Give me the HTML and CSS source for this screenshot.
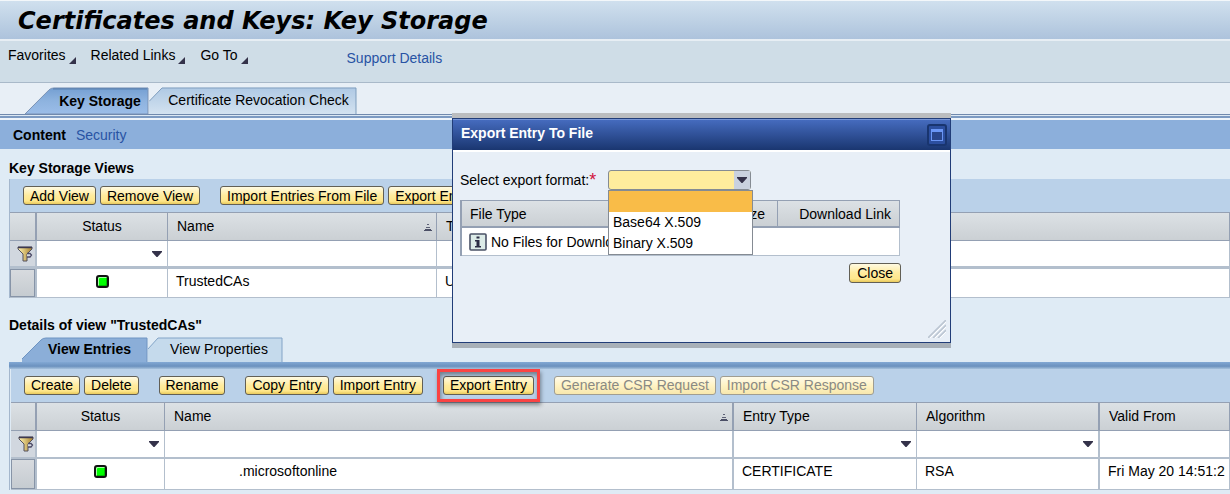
FILE: index.html
```html
<!DOCTYPE html>
<html lang="en">
<head>
<meta charset="utf-8">
<title>Certificates and Keys: Key Storage</title>
<link rel="stylesheet" href="styles.css">
</head>
<body>
<svg width="0" height="0" class="defs" aria-hidden="true">
  <defs>
    <linearGradient id="gold" x1="0" x2="1"><stop offset="0" stop-color="#fff3b0"/><stop offset="1" stop-color="#a9822f"/></linearGradient>
    <symbol id="funnel" viewBox="0 0 16 16">
      <path d="M1 1H15V3L10 8V15H6V8L1 3Z" fill="url(#gold)" stroke="#55515c"/>
      <path d="M1 1.5H15" stroke="#3d3950" stroke-width="1.5"/>
      <path d="M10 7.500H13L14.500 9L13 11H10" fill="#d5dae0" stroke="#4c4a66" stroke-width="1.3"/>
    </symbol>
    <symbol id="sort" viewBox="0 0 8 8">
      <path d="M3 0H5V1H3Z" fill="#5d6176"/><path d="M2 3.500H6" stroke="#5d6176" stroke-width="1"/><path d="M1 5H7V6H8V7H0V6H1Z" fill="#4b4f66"/>
    </symbol>
    <symbol id="corner" viewBox="0 0 7 7"><path d="M7 0V7H0Z" fill="#34324a"/></symbol>
    <symbol id="down" viewBox="0 0 10 6"><path d="M0 0H10V1L5.500 6H4.500L0 1Z" fill="#34324a"/></symbol>
  </defs>
</svg>

<header class="title-bar"><h1>Certificates and Keys: Key Storage</h1></header>

<nav class="menu-bar">
  <button class="menu">Favorites<svg class="corner"><use href="#corner"/></svg></button>
  <button class="menu">Related Links<svg class="corner"><use href="#corner"/></svg></button>
  <button class="menu">Go To<svg class="corner"><use href="#corner"/></svg></button>
  <a class="support" href="#support">Support Details</a>
</nav>

<nav class="tabs main-tabs">
  <button class="tab active"><svg class="tab-shape" viewBox="0 0 124 28" preserveAspectRatio="none"><defs><linearGradient id="on" x2="0" y2="1"><stop offset="0" stop-color="#749fd2"/><stop offset=".5" stop-color="#8eb3df"/><stop offset="1" stop-color="#9bbde8"/></linearGradient></defs><path d="M0 28L24 3Q26 1 29 1H123V28Z" fill="url(#on)" stroke="#7891b4"/><path d="M28 2H122" stroke="#567aa9"/></svg><span>Key Storage</span></button>
  <button class="tab"><svg class="tab-shape" viewBox="0 0 208 28" preserveAspectRatio="none"><defs><linearGradient id="off" x2="0" y2="1"><stop offset="0" stop-color="#afc9e4"/><stop offset="1" stop-color="#d3e2f0"/></linearGradient></defs><path d="M0 28V15L13 1H207V28Z" fill="url(#off)"/><path d="M0 15L13 1H207V28" fill="none" stroke="#7d9cbd"/></svg><span>Certificate Revocation Check</span></button>
</nav>
<div class="tab-rule"></div>
<nav class="sub-nav"><a class="current" href="#content">Content</a><a href="#security">Security</a></nav>

<main>
  <section class="views">
    <h2>Key Storage Views</h2>
    <div class="grid-box">
      <div class="toolbar">
        <button class="btn">Add View</button><button class="btn">Remove View</button>
        <button class="btn group">Import Entries From File</button><button class="btn">Export Entries To File</button>
      </div>
      <table class="grid">
        <colgroup><col class="c-pick"><col class="c-state"><col class="c-view"><col></colgroup>
        <thead><tr><th class="thick"></th><th class="center">Status</th><th><div class="head">Name<svg class="sort"><use href="#sort"/></svg></div></th><th>Type</th></tr></thead>
        <tbody>
          <tr class="filter"><td class="pick thick"><svg class="funnel"><use href="#funnel"/></svg></td><td><button class="drop" aria-label="Filter status"><svg class="down"><use href="#down"/></svg></button></td><td></td><td></td></tr>
          <tr><td class="pick thick raised"></td><td class="center"><i class="led"></i></td><td>TrustedCAs</td><td>USER</td></tr>
        </tbody>
      </table>
    </div>
  </section>

  <section class="details">
    <h2>Details of view "TrustedCAs"</h2>
    <nav class="tabs small-tabs">
      <button class="tab active"><svg class="tab-shape" viewBox="0 0 126 25" preserveAspectRatio="none"><path d="M0 25V22L19 3Q21 1 24 1H125V25Z" fill="#8baed8"/><path d="M0 22L19 3Q21 1 24 1H125V25" fill="none" stroke="#6e94c2"/></svg><span>View Entries</span></button>
      <button class="tab"><svg class="tab-shape" viewBox="0 0 135 25" preserveAspectRatio="none"><path d="M0 25V12L10 1H134V25Z" fill="#c5daec"/><path d="M0 12L10 1H134V25" fill="none" stroke="#83a4c7"/></svg><span>View Properties</span></button>
    </nav>
    <div class="blue-rule"></div>
    <div class="grid-box inset">
      <div class="toolbar">
        <button class="btn">Create</button><button class="btn">Delete</button>
        <button class="btn group">Rename</button>
        <button class="btn group">Copy Entry</button><button class="btn">Import Entry</button>
        <span class="marked group"><button class="btn">Export Entry</button></span>
        <button class="btn group" disabled>Generate CSR Request</button><button class="btn" disabled>Import CSR Response</button>
      </div>
      <table class="grid entries">
        <colgroup><col class="c-pick"><col class="c-flag"><col class="c-name"><col class="c-type"><col class="c-type"><col></colgroup>
        <thead><tr><th class="thick"></th><th class="center">Status</th><th class="thick"><div class="head">Name<svg class="sort"><use href="#sort"/></svg></div></th><th>Entry Type</th><th class="thick">Algorithm</th><th>Valid From</th></tr></thead>
        <tbody>
          <tr class="filter"><td class="pick thick"><svg class="funnel"><use href="#funnel"/></svg></td><td><button class="drop" aria-label="Filter status"><svg class="down"><use href="#down"/></svg></button></td><td class="thick"></td><td><button class="drop" aria-label="Filter entry type"><svg class="down"><use href="#down"/></svg></button></td><td class="thick"><button class="drop" aria-label="Filter algorithm"><svg class="down"><use href="#down"/></svg></button></td><td></td></tr>
          <tr><td class="pick thick raised"></td><td class="center"><i class="led"></i></td><td class="thick host">.microsoftonline</td><td>CERTIFICATE</td><td class="thick">RSA</td><td class="date"><div>Fri May 20 14:51:28</div></td></tr>
        </tbody>
      </table>
    </div>
  </section>
</main>

<div class="dialog" role="dialog" aria-labelledby="dialog-title">
  <div class="dialog-head"><h2 id="dialog-title">Export Entry To File</h2>
    <button class="maximize" aria-label="Maximize"><svg width="20" height="22" viewBox="0 0 20 22"><rect x="1" y="1" width="18" height="20" rx="2" fill="#2c4f9f" stroke="#19356f" stroke-width="2"/><rect x="4.500" y="5.500" width="11" height="11" fill="#29458a" stroke="#6a96f5"/><path d="M4 6.500H16" stroke="#6a96f5" stroke-width="3"/></svg></button>
  </div>
  <div class="dialog-body">
    <div class="field">
      <label for="format">Select export format:<b class="star">*</b></label>
      <div class="combo">
        <select id="format"><option></option><option>Base64 X.509</option><option>Binary X.509</option></select>
        <span class="combo-arrow"><svg class="down"><use href="#down"/></svg></span>
        <ul class="options" role="listbox"><li class="hot" role="option"></li><li role="option">Base64 X.509</li><li role="option">Binary X.509</li></ul>
      </div>
    </div>
    <table class="files">
      <colgroup><col><col class="c-size"><col class="c-link"></colgroup>
      <thead><tr><th>File Type</th><th class="right">File Size</th><th class="right">Download Link</th></tr></thead>
      <tbody><tr><td colspan="3"><div class="note"><svg width="18" height="18" viewBox="0 0 18 18"><rect x="1" y="1" width="16" height="16" rx="1" fill="#dcebe7" stroke="#4a5266" stroke-width="1.6"/><path d="M7.500 3.500H10.500V5.500H7.500ZM6 7H10.500V13H12V14.500H6V13H7.500V8.500H6Z" fill="#2b2c44"/></svg>No Files for Download</div></td></tr></tbody>
    </table>
    <div class="actions"><button class="btn">Close</button></div>
  </div>
  <svg class="grip" width="18" height="18" viewBox="0 0 18 18"><path d="M0 18L18 0M5 18L18 5M10 18L18 10" stroke="#bcc6d2" stroke-width="1.6"/><path d="M2 18L18 2M7 18L18 7M12 18L18 12" stroke="#fff"/></svg>
</div>
</body>
</html>
```

FILE: styles.css
```css
* { box-sizing: border-box; }
body { margin: 0; position: relative; overflow: hidden; min-height: 100vh; background: #dfebf5; color: #000; font: 14px/16px "Liberation Sans", Arial, sans-serif; }
button, select { font: inherit; color: inherit; }
h1, h2 { margin: 0; font-size: 14px; line-height: 16px; font-weight: bold; }
a { color: #2853a4; text-decoration: none; }
.defs { position: absolute; }

.title-bar { height: 41px; padding: 4px 18px; border-top: 1px solid #f3f7fa; border-bottom: 2px solid #e7eef4; background: linear-gradient(#d0e0ee, #adc3dc); }
.title-bar h1 { font: italic bold 24px/32px Verdana, "DejaVu Sans", sans-serif; white-space: nowrap; }

.menu-bar { display: flex; align-items: center; height: 42px; padding: 0 8px 14px; background: #cfdde7; border-bottom: 1px solid #a9b9c9; }
.menu { display: flex; align-items: flex-end; gap: 3px; margin-right: 15px; padding: 0; border: 0; background: none; }
.corner { width: 7px; height: 7px; margin-bottom: -1px; }
.support { margin: 6px 0 0 84px; }

.tabs { display: flex; }
.tab { position: relative; padding: 0; border: 0; background: none; text-align: center; }
.tab span { position: relative; }
.tab-shape { position: absolute; inset: 0; width: 100%; height: 100%; }
.tab.active { font-weight: bold; }
.main-tabs { height: 31px; padding: 4px 0 0 25px; background: #e8eff6; }
.main-tabs .tab { width: 208px; height: 27px; padding: 0 0 2px 11px; }
.main-tabs .active { width: 124px; padding: 0 0 0 26px; }
.tab-rule { height: 6px; border-bottom: 2px solid #eef4fa; background: linear-gradient(#7089ad 1px, #dce8f3 1px 2px, #7c9ac2 2px); }
.sub-nav { display: flex; gap: 10px; align-items: center; height: 29px; padding: 0 13px 0; background: #8cafdb; }
.current { color: #000; font-weight: bold; }

main { padding-left: 9px; }
.views { padding-top: 11px; }
.views h2 { margin-bottom: 3px; }
.grid-box { border-left: 1px solid #a4b7cd; }
.toolbar { display: flex; align-items: center; gap: 4px; height: 33px; padding: 0 13px; background: #bad1e9; }
.btn { flex: none; height: 19px; padding: 0 6px; border: 1px solid #625f55; border-radius: 3px; background: linear-gradient(#fffae2, #ffeb9d 50%, #ffe78c 82%, #e8c95c); line-height: 16px; white-space: nowrap; }
.group { margin-left: 16px; }
.btn:disabled { color: #8a8a84; border-color: #a09d91; background: linear-gradient(#fffbea, #fff3c4 50%, #f7e7ad); }

.grid { width: 100%; table-layout: fixed; border-collapse: separate; border-spacing: 0; }
.grid th { height: 29px; padding: 0 9px 2px; border: solid #94a0b3; border-width: 1px 1px 1px 0; background: linear-gradient(#dce1e5, #cbd0d4); font-weight: normal; text-align: left; }
.grid td { height: 29px; padding: 0 8px 4px; border-right: 1px solid #b3bfcd; border-bottom: 1px solid #b3bfcd; background: #fff; white-space: nowrap; }
.grid .filter td { height: 28px; padding: 0 7px; border-bottom: 3px solid #b3bfcd; }
.grid .thick { border-right-width: 2px; }
.grid .center { text-align: center; }
.grid .pick { padding: 0; background: #d1d7df; text-align: center; }
.grid .raised { background: linear-gradient(#d8dbdf, #c5cbd0); box-shadow: inset 0 0 0 1px #8794a7; }
.c-pick { width: 27px; } .c-state { width: 131px; } .c-view { width: 269px; }
.entries .c-pick { width: 26px; } .c-flag { width: 128px; } .c-name { width: 569px; } .c-type { width: 183px; }
.head { display: flex; justify-content: space-between; align-items: center; }
.sort { width: 8px; height: 8px; margin: 4px -5px 0 0; }
.funnel { display: block; width: 16px; height: 16px; margin: 0 auto; }
.drop { display: block; margin: 0 -2px 0 auto; padding: 0; border: 0; background: none; line-height: 0; }
.down { width: 10px; height: 6px; }
.led { display: block; width: 13px; height: 13px; margin: 0 auto; border: 2px solid #111; border-radius: 3px; background: #0f0; box-shadow: inset 1px 1px #a5ffa5, inset -1px -1px #00bd00; }

.details { padding-top: 19px; }
.small-tabs { height: 29px; padding: 4px 0 0 13px; }
.small-tabs .tab { width: 135px; height: 25px; padding: 0 0 2px 7px; }
.small-tabs .active { width: 126px; padding: 0 0 2px 9px; }
.blue-rule { height: 7px; background: linear-gradient(#82a8d4, #6b91be 60%, #a7c2dd); }
.inset { padding-left: 1px; }
.inset .toolbar { padding-bottom: 1px; }
.entries .filter td { height: 28px; border-bottom-width: 2px; }
.entries td { height: 31px; padding-bottom: 6px; }
.entries .host { padding-left: 74px; }
.grid .date { padding-right: 4px; }
.date div { overflow: hidden; }
.marked { position: relative; display: flex; }
.marked::after { content: ""; position: absolute; inset: -7px -6px; border: 3px solid #fa4343; box-shadow: 1px 3px 4px #0006, inset 1px 3px 4px #0006; pointer-events: none; }

.dialog { position: absolute; left: 452px; top: 118px; width: 499px; height: 225px; border: 1px solid #213d78; background: #e8eff7; box-shadow: 0 -5px #bbbdbf, 0 5px #a8b0b8; }
.dialog-head { display: flex; align-items: center; justify-content: space-between; height: 31px; padding: 0 3px 0 8px; border-top: 1px solid #7795d5; background: linear-gradient(#456bbe, #1a3670); box-shadow: 0 2px #fff; color: #fff; }
.dialog-head h2 { padding-bottom: 4px; }
.maximize { padding: 0; border: 0; background: none; line-height: 0; }
.dialog-body { padding: 20px 50px 0 7px; }
.field { display: flex; align-items: center; height: 20px; }
.field label { width: 148px; white-space: nowrap; }
.star { color: #d2133c; font-weight: normal; font-size: 18px; line-height: 16px; vertical-align: bottom; }
.combo { position: relative; width: 143px; height: 20px; }
.combo select { appearance: none; display: block; width: 100%; height: 100%; padding: 0 20px 0 4px; border: 1px solid #858b93; border-radius: 3px; background: #ffec9d; }
.combo-arrow { position: absolute; top: 1px; right: 1px; display: flex; align-items: center; justify-content: center; width: 16px; height: 18px; background: #c9d1df; pointer-events: none; }
.options { position: absolute; z-index: 1; top: 20px; left: 0; width: 145px; margin: 0; padding: 0; border: 1px solid #858b93; background: #fff; list-style: none; }
.options li { height: 21px; padding: 2px 4px; }
.options .hot { height: 21px; background: #f9bc48; }
.files { width: 100%; margin-top: 10px; table-layout: fixed; border-collapse: separate; border-spacing: 0; border-left: 2px solid #94a0b3; }
.files th { height: 28px; padding: 0 8px; border: solid #94a0b3; border-width: 1px 1px 2px 0; background: linear-gradient(#dce1e5, #cbd0d4); font-weight: normal; text-align: left; }
.files .right { text-align: right; }
.files th.right:nth-child(2) { padding-right: 12px; }
.files td { height: 28px; padding: 0 7px; border: solid #b3bfcd; border-width: 0 1px 1px 0; background: #fff; }
.c-size { width: 100px; } .c-link { width: 122px; }
.note { display: flex; align-items: center; gap: 4px; }
.actions { display: flex; justify-content: flex-end; margin: 7px -1px 0 0; }
.actions .btn { height: 20px; padding: 0 7px; }
.grip { position: absolute; right: 4px; bottom: 4px; }
```
